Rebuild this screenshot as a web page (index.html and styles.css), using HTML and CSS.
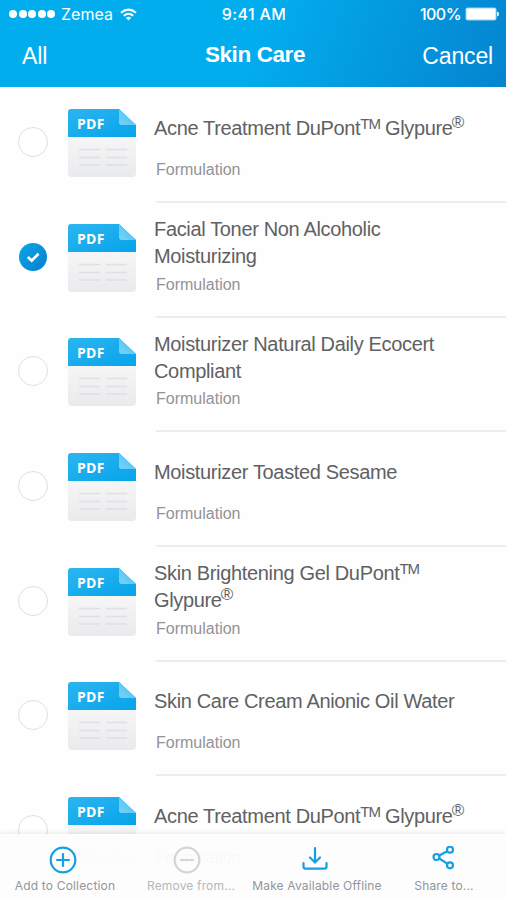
FILE: index.html
```
<!DOCTYPE html>
<html lang="en">
<head>
<meta charset="utf-8">
<title>Skin Care</title>
<link rel="stylesheet" href="styles.css">
</head>
<body>
<svg class="defs" width="0" height="0" aria-hidden="true">
  <defs>
    <linearGradient id="blue" x1="0" y1="0" x2="1" y2="1"><stop offset="0" stop-color="#2cb5f0"/><stop offset="1" stop-color="#06a4ea"/></linearGradient>
    <linearGradient id="paper" x1="0" y1="0" x2="0" y2="1"><stop offset="0" stop-color="#f6f6f7"/><stop offset="1" stop-color="#e9eaec"/></linearGradient>
    <linearGradient id="fold" x1="0" y1="1" x2="1" y2="0"><stop offset="0" stop-color="#7cd3f8"/><stop offset="1" stop-color="#3fbcf2"/></linearGradient>
    <symbol id="pdf" viewBox="0 0 68 68">
      <path d="M0 28H68V64Q68 68 64 68H4Q0 68 0 64Z" fill="url(#paper)"/>
      <path d="M3 0H51L68 16V28H0V3Q0 0 3 0Z" fill="url(#blue)"/>
      <path d="M51 0L68 16H54Q51 16 51 13Z" fill="url(#fold)"/>
      <path d="M11 40.500H32M38 40.500H59M11 48.500H32M38 48.500H59M11 56H32M38 56H59" stroke="#dfe0e2" stroke-width="1.500"/>
    </symbol>
  </defs>
</svg>
<div class="screen">
  <header class="header">
    <div class="status">
      <div class="carrier">
        <span class="dots"><i></i><i></i><i></i><i></i><i></i></span>
        <span class="name">Zemea</span>
        <svg class="wifi" width="17" height="13" viewBox="0 0 17 13" fill="none" stroke="#fff" stroke-width="2"><path d="M1 4.800Q8.500 -1.600 16 4.800"/><path d="M3.800 7.700Q8.500 3.700 13.200 7.700"/><path d="M8.500 12.500L5.900 9.800Q8.500 7.900 11.100 9.800Z" fill="#fff" stroke="none"/></svg>
      </div>
      <span class="time">9:41 AM</span>
      <div class="battery">
        <span>100%</span>
        <svg width="34" height="14" viewBox="0 0 34 14"><rect x=".5" y=".5" width="31" height="13" rx="2" fill="#fff" fill-opacity=".6"/><rect x="1.500" y="1.500" width="29" height="11" rx="1" fill="#fff"/><path d="M32 4.500Q34 5 34 7T32 9.500Z" fill="#fff"/></svg>
      </div>
    </div>
    <nav class="nav">
      <span class="all">All</span>
      <h1>Skin Care</h1>
      <span class="cancel">Cancel</span>
    </nav>
  </header>
  <main class="list">
    <article class="row">
      <span class="check"></span>
      <div class="file"><svg><use href="#pdf"/></svg><b>PDF</b></div>
      <div class="body"><h2><span>Acne Treatment DuPont<sup>TM</sup> Glypure<sup class="reg">®</sup></span></h2><p>Formulation</p></div>
    </article>
    <article class="row">
      <span class="check on"><svg width="28" height="28" viewBox="0 0 28 28"><path d="M8.800 14L12.700 17.600L19.500 10.800" fill="none" stroke="#fff" stroke-width="2.700"/></svg></span>
      <div class="file"><svg><use href="#pdf"/></svg><b>PDF</b></div>
      <div class="body"><h2><span>Facial Toner Non Alcoholic<br>Moisturizing</span></h2><p>Formulation</p></div>
    </article>
    <article class="row">
      <span class="check"></span>
      <div class="file"><svg><use href="#pdf"/></svg><b>PDF</b></div>
      <div class="body"><h2><span>Moisturizer Natural Daily Ecocert<br>Compliant</span></h2><p>Formulation</p></div>
    </article>
    <article class="row">
      <span class="check"></span>
      <div class="file"><svg><use href="#pdf"/></svg><b>PDF</b></div>
      <div class="body"><h2><span>Moisturizer Toasted Sesame</span></h2><p>Formulation</p></div>
    </article>
    <article class="row">
      <span class="check"></span>
      <div class="file"><svg><use href="#pdf"/></svg><b>PDF</b></div>
      <div class="body"><h2><span>Skin Brightening Gel DuPont<sup>TM</sup><br>Glypure<sup class="reg">®</sup></span></h2><p>Formulation</p></div>
    </article>
    <article class="row">
      <span class="check"></span>
      <div class="file"><svg><use href="#pdf"/></svg><b>PDF</b></div>
      <div class="body"><h2><span>Skin Care Cream Anionic Oil Water</span></h2><p>Formulation</p></div>
    </article>
    <article class="row">
      <span class="check"></span>
      <div class="file"><svg><use href="#pdf"/></svg><b>PDF</b></div>
      <div class="body"><h2><span>Acne Treatment DuPont<sup>TM</sup> Glypure<sup class="reg">®</sup></span></h2><p>Formulation</p></div>
    </article>
  </main>
  <footer class="toolbar">
    <div class="action"><svg width="28" height="28" viewBox="0 0 28 28"><circle cx="14" cy="14" r="12.300"/><path d="M14 8V20M8 14H20"/></svg><span>Add to Collection</span></div>
    <div class="action off"><svg width="28" height="28" viewBox="0 0 28 28"><circle cx="14" cy="14" r="12.300"/><path d="M8 14H20"/></svg><span>Remove from...</span></div>
    <div class="action"><svg width="28" height="28" viewBox="0 0 28 28"><path d="M14 2V16M9 11.500L14 16.500L19 11.500M2.500 17V20.500Q2.500 22.700 4.700 22.700H23.300Q25.500 22.700 25.500 20.500V17"/></svg><span>Make Available Offline</span></div>
    <div class="action"><svg width="28" height="28" viewBox="0 0 28 28"><circle cx="6.500" cy="11" r="3"/><circle cx="20" cy="3.700" r="3"/><circle cx="20" cy="19.300" r="3"/><path d="M9.300 9.500L17.200 5.200M9.300 12.500L17.200 17.600"/></svg><span>Share to...</span></div>
  </footer>
</div>
</body>
</html>
```
FILE: styles.css
```
* { box-sizing: border-box; }
body { margin: 0; background: #fff; font-family: "Liberation Sans", Arial, sans-serif; }
.defs { position: absolute; }
.screen { position: relative; width: 506px; height: 900px; overflow: hidden; background: #fefefe; }
.header { height: 87px; background: linear-gradient(110deg, #02adee 0%, #02adee 50%, #0584cf 100%); color: #fff; }
.status { display: grid; grid-template-columns: 1fr auto 1fr; height: 28px; padding: 0 7px 0 9px; align-items: center; font: 500 16px/28px Inter, sans-serif; }
.carrier, .battery { display: flex; align-items: center; }
.battery { justify-content: flex-end; gap: 4px; letter-spacing: -.55px; }
.dots { display: flex; gap: 1.500px; margin-right: 6px; }
.dots i { width: 8px; height: 8px; border-radius: 50%; background: #fff; }
.name { font-weight: 400; letter-spacing: 0; }
.wifi { margin-left: 7px; }
.time { letter-spacing: .35px; }
.nav { display: grid; grid-template-columns: 1fr auto 1fr; height: 56px; padding: 0 13px 0 22px; align-items: center; font-size: 23px; letter-spacing: -.15px; }
.nav h1 { margin: 0 5px 2px 0; font-size: 22.500px; letter-spacing: -.4px; }
.cancel { text-align: right; }
.list { padding-top: 1px; }
.row { display: flex; height: 114.700px; padding: 21px 0 0 18px; }
.check { flex: none; width: 30px; height: 30px; margin: 18px 20px 0 0; border: 1.500px solid #dfe0e2; border-radius: 50%; background: #fff; }
.check.on { width: 28px; height: 28px; margin: 19px 21px 0 1px; border: 0; background: linear-gradient(135deg, #08a7ea, #087fcb); }
.check svg { display: block; }
.file { position: relative; flex: none; width: 68px; height: 68px; }
.file svg { display: block; width: 68px; height: 68px; }
.file b { position: absolute; left: 9px; top: 5px; color: #fff; font: 700 14px/20px "Open Sans", sans-serif; letter-spacing: .3px; }
.body { flex: 1; height: 102px; margin: -8px 0 0 20px; border-bottom: 2px solid #ededed; }
.body h2 { display: flex; align-items: center; height: 54px; margin: 0 0 0 -2px; padding-top: 1px; font-weight: 400; font-size: 20px; line-height: 27px; color: #606163; letter-spacing: -.34px; white-space: nowrap; }
.body sup { font-size: 15px; line-height: 0; vertical-align: 6px; letter-spacing: -1.100px; }
.body .reg { font-size: 17px; vertical-align: 7px; margin-left: -1px; }
.body p { margin: 5px 0 0; font-size: 16px; line-height: 20px; color: #929396; }
.toolbar { position: absolute; left: 0; right: 0; bottom: 0; display: grid; grid-template-columns: 130px 122px 130px 124px; height: 66px; background: rgba(253, 253, 254, .95); box-shadow: 0 -1px 5px rgba(0, 0, 0, .09); }
.action { display: flex; flex-direction: column; align-items: center; padding-top: 12px; font: 400 12px/16px Inter, sans-serif; color: #92969c; letter-spacing: .17px; white-space: nowrap; }
.action svg { display: block; fill: none; stroke: #159fe4; stroke-width: 2.200; stroke-linecap: round; margin: 0 4px 4px 0; }
.action:last-child svg { margin-right: 0; }
.off { color: #b4b7bb; }
.action.off svg { stroke: #d2d4d6; margin-right: 9px; }
```
